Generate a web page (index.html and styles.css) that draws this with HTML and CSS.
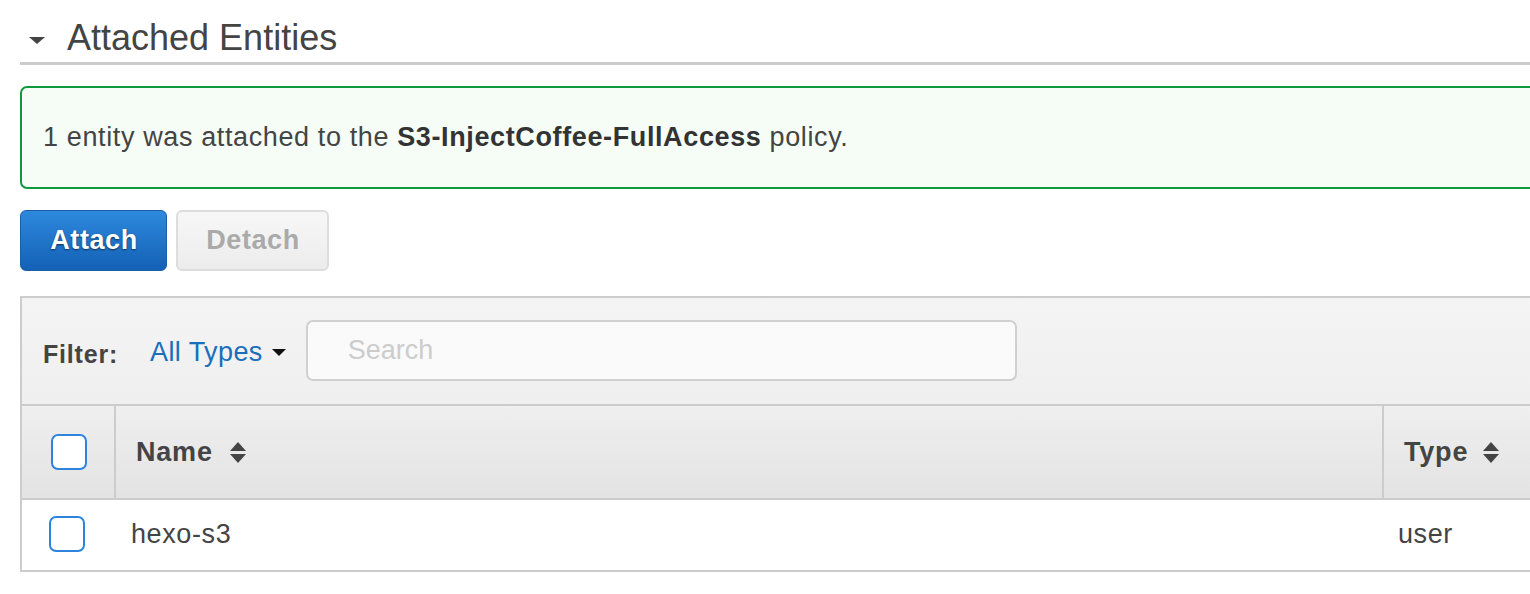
FILE: index.html
```html
<!DOCTYPE html>
<html>
<head>
<meta charset="utf-8">
<link rel="stylesheet" href="styles.css">
</head>
<body>
<div class="page">
  <div class="section-head">
    <span class="caret-down"></span>
    <h2 class="section-title">Attached Entities</h2>
  </div>

  <div class="alert">
    <span>1 entity was attached to the <b>S3-InjectCoffee-FullAccess</b> policy.</span>
  </div>

  <div class="actions">
    <button class="btn btn-primary">Attach</button>
    <button class="btn btn-disabled">Detach</button>
  </div>

  <div class="panel">
    <div class="filter-bar">
      <span class="filter-label">Filter:</span>
      <span class="filter-type">All Types <span class="caret-small"></span></span>
      <div class="search">Search</div>
    </div>
    <div class="grid-row head-row">
      <div class="cell cell-check"><span class="checkbox"></span></div>
      <div class="cell cell-name sep">Name <span class="sort"><span class="up"></span><span class="down"></span></span></div>
      <div class="cell cell-type sep">Type <span class="sort"><span class="up"></span><span class="down"></span></span></div>
    </div>
    <div class="grid-row body-row">
      <div class="cell cell-check"><span class="checkbox"></span></div>
      <div class="cell cell-name">hexo-s3</div>
      <div class="cell cell-type">user</div>
    </div>
  </div>
</div>
</body>
</html>
```

FILE: styles.css
```css
html, body {
  margin: 0;
  padding: 0;
  overflow: hidden;
  background: #fff;
}
body {
  font-family: "Helvetica Neue", "Liberation Sans", Arial, sans-serif;
  color: #444;
}
.page {
  padding-left: 20px;
  width: 1580px;
}
.section-head {
  display: flex;
  align-items: flex-start;
  height: 44px;
  padding-top: 18px;
  border-bottom: 3px solid #ccc;
}
.caret-down {
  width: 0;
  height: 0;
  border-left: 8px solid transparent;
  border-right: 8px solid transparent;
  border-top: 7px solid #444;
  margin-left: 9px;
  margin-right: 22px;
  margin-top: 19px;
}
.section-title {
  margin: 0;
  font-weight: normal;
  font-size: 36px;
  line-height: 40px;
  color: #444;
}
.alert {
  margin-top: 21px;
  height: 99px;
  border: 2px solid #0e9a3a;
  border-radius: 7px;
  background: #f5fdf6;
  display: flex;
  align-items: center;
  padding-left: 21px;
  font-size: 27px;
  letter-spacing: 0.62px;
  color: #444;
}
.alert b {
  color: #333;
}
.actions {
  margin-top: 21px;
  display: flex;
  gap: 9px;
}
.btn {
  height: 61px;
  font-family: "Helvetica Neue", "Liberation Sans", Arial, sans-serif;
  font-weight: bold;
  font-size: 27px;
  letter-spacing: 0.6px;
  border-radius: 6px;
  padding: 0 0 0 1px;
}
.btn-primary {
  width: 147px;
  color: #fff;
  background: linear-gradient(#2d89dd, #1461b6);
  border: 1px solid #1b5fa9;
  text-shadow: 0 1px 2px rgba(0,0,0,0.6);
}
.btn-disabled {
  width: 153px;
  color: #aaa;
  background: linear-gradient(#f7f7f7, #ececec);
  border: 2px solid #ddd;
}
.panel {
  margin-top: 25px;
  border-top: 2px solid #ccc;
  border-left: 2px solid #ccc;
}
.filter-bar {
  height: 106px;
  background: linear-gradient(#f4f4f4, #efefef);
  display: flex;
  align-items: center;
  padding-left: 21px;
  border-bottom: 2px solid #ccc;
}
.filter-label {
  font-weight: bold;
  font-size: 25px;
  letter-spacing: 0.8px;
  color: #444;
  margin-top: 6px;
}
.filter-type {
  margin-left: 32px;
  font-size: 27px;
  letter-spacing: 0.4px;
  color: #1a6fbb;
  display: flex;
  align-items: center;
  margin-top: 2px;
}
.caret-small {
  width: 0;
  height: 0;
  border-left: 7px solid transparent;
  border-right: 7px solid transparent;
  border-top: 7px solid #111;
  margin-left: 9px;
}
.search {
  margin-left: 20px;
  width: 667px;
  height: 57px;
  border: 2px solid #d0d0d0;
  border-radius: 7px;
  background: #fafafa;
  padding-left: 40px;
  display: flex;
  align-items: center;
  font-size: 27px;
  color: #ccc;
  margin-top: -2px;
}
.grid-row {
  display: grid;
  grid-template-columns: 92px 1268px 1fr;
}
.head-row {
  height: 92px;
  background: linear-gradient(#efefef, #e3e3e3);
  border-bottom: 2px solid #ccc;
  box-shadow: 0 1px 0 #fff;
}
.body-row {
  height: 66px;
  padding-bottom: 3px;
  border-bottom: 2px solid #ccc;
  background: #fff;
  margin-top: 1px;
}
.cell {
  display: flex;
  align-items: center;
  font-size: 27px;
  letter-spacing: 0.6px;
}
.head-row .cell {
  font-weight: bold;
  color: #444;
  letter-spacing: 0.8px;
}
.sep {
  border-left: 2px solid #ccc;
}
.cell-check {
  justify-content: center;
}
.head-row .cell-check {
  padding-left: 2px;
}
.body-row .cell-check {
  padding-right: 2px;
}
.checkbox {
  width: 32px;
  height: 32px;
  border: 2px solid #2c84dc;
  border-radius: 7px;
  background: #fff;
}
.head-row .cell-name {
  padding-left: 20px;
}
.head-row .cell-type {
  padding-left: 20px;
}
.body-row .cell-name {
  padding-left: 17px;
}
.body-row .cell-type {
  padding-left: 16px;
}
.sort {
  display: inline-flex;
  flex-direction: column;
  align-items: center;
  gap: 3px;
  margin-left: 17px;
}
.head-row .cell-type .sort {
  margin-left: 15px;
}
.sort .up {
  width: 0;
  height: 0;
  border-left: 8px solid transparent;
  border-right: 8px solid transparent;
  border-bottom: 9px solid #444;
}
.sort .down {
  width: 0;
  height: 0;
  border-left: 8px solid transparent;
  border-right: 8px solid transparent;
  border-top: 9px solid #444;
}
```
